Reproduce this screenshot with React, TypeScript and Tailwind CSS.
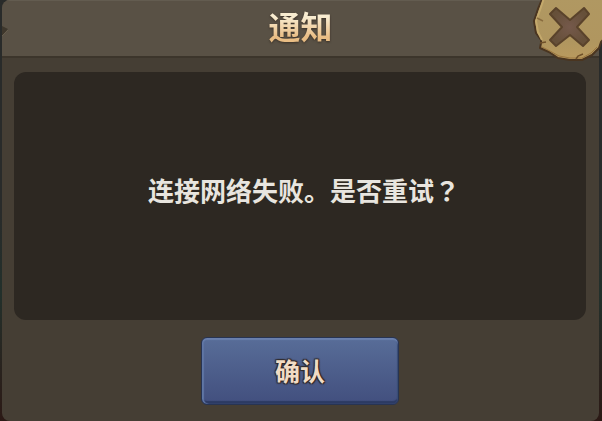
import { FC } from "react";

interface NoticeDialogProps {
  title: string;
  message: string;
  confirmLabel: string;
}

const CloseIcon: FC = () => (
  <svg viewBox="0 0 72 64" className="h-16 w-18" aria-hidden="true">
    <defs>
      <linearGradient id="coin" x1="0" y1="0" x2="0" y2="1">
        <stop offset="0" stopColor="#b09862" />
        <stop offset="0.7" stopColor="#b0965f" />
        <stop offset="1" stopColor="#b99a5e" />
      </linearGradient>
      <radialGradient id="cross">
        <stop offset="0" stopColor="#75594b" />
        <stop offset="1" stopColor="#665039" />
      </radialGradient>
    </defs>
    <path
      d="M11 -3 L6 9 L2 21 L4 33 L9 40 L9 43 L8 48 L17 52 L26 58 L38 60 L50 60 L60 55 L67 48 L69 42 L74 37 L74 -3 Z"
      fill="url(#coin)"
      stroke="#4a3520"
      strokeWidth="2"
      strokeLinejoin="round"
    />
    <path d="M12 -2 L8 10 L4 21 L6 32 L10 40" fill="none" stroke="#c4a96c" strokeWidth="2" />
    <path d="M10 47 L18 51 L27 56 L38 58 L50 58 L59 53 L65 47" fill="none" stroke="#9a7640" strokeWidth="1" />
    <path d="M5 18 L11 21" fill="none" stroke="#8a6d3f" strokeWidth="1.5" />
    <path d="M8 43 L14 42 M44 59 L46 56 L51 54" fill="none" stroke="#6f5029" strokeWidth="1.5" />
    <path
      d="M24 8 L38 20 L52 8 L57 14 L45 27 L57 40 L51 46 L38 35 L24 46 L18 40 L30 27 L18 14 Z"
      fill="url(#cross)"
      stroke="#5a432b"
      strokeWidth="2"
      strokeLinejoin="round"
    />
  </svg>
);

const NoticeDialog: FC<NoticeDialogProps> = ({ title, message, confirmLabel }) => (
  <section
    role="dialog"
    aria-labelledby="notice-title"
    className="relative overflow-hidden rounded-lg bg-[#453e34]"
  >
    <header className="relative flex h-[58px] items-center justify-center border-t border-b-2 border-t-[#635c50] border-b-[#3c352b] bg-[#595145] pb-2">
      <svg viewBox="0 0 8 12" className="absolute top-6 left-0 h-3 w-2" aria-hidden="true">
        <path d="M0 1 L6 4 L0 11 Z" fill="#3e372c" />
        <path d="M0 11 L6 5" stroke="#665d4d" />
      </svg>
      <h1
        id="notice-title"
        className="bg-linear-to-b from-[#f8ecd0] from-30% to-[#e9bd84] to-80% bg-clip-text text-[32px] leading-10 font-bold text-transparent drop-shadow-[0_1px_1px_#3a3026]"
      >
        {title}
      </h1>
    </header>
    <div className="pt-3.5 pr-[13px] pb-4 pl-3">
      <div className="flex h-[248px] items-center justify-center rounded-xl bg-[#2d2822] pl-2">
        <p className="pb-3 font-['Noto_Sans_CJK_JP',sans-serif] text-[26px] leading-8 font-bold text-[#e8e5df]">
          {message}
        </p>
      </div>
      <div className="mt-[17px] flex justify-center">
        <button
          type="button"
          className="h-[68px] w-[198px] rounded-md border border-[#283452] bg-linear-to-b from-[#586d98] to-[#424f7e] text-[25px] font-bold text-[#f1dcc5] shadow-[inset_0_2px_1px_#6a80ae,inset_2px_0_1px_#5f75a5,inset_-1px_0_1px_#34466f,inset_0_-3px_1px_#2c3a63] [text-shadow:-1px_-1px_1px_#302a2b,1px_-1px_1px_#302a2b,-1px_1px_1px_#302a2b,1px_1px_1px_#302a2b]"
        >
          {confirmLabel}
        </button>
      </div>
    </div>
  </section>
);

export default function App() {
  return (
    <main className="relative min-h-screen overflow-hidden bg-linear-to-b from-[#292b2a] from-50% via-[#22302b] via-70% to-[#2b1915] pr-[3px] pl-0.5 font-['Noto_Sans_CJK_SC',sans-serif]">
      <NoticeDialog title="通知" message="连接网络失败。是否重试？" confirmLabel="确认" />
      <button type="button" aria-label="关闭" className="absolute top-0 right-0 -mr-0.5">
        <CloseIcon />
      </button>
    </main>
  );
}
